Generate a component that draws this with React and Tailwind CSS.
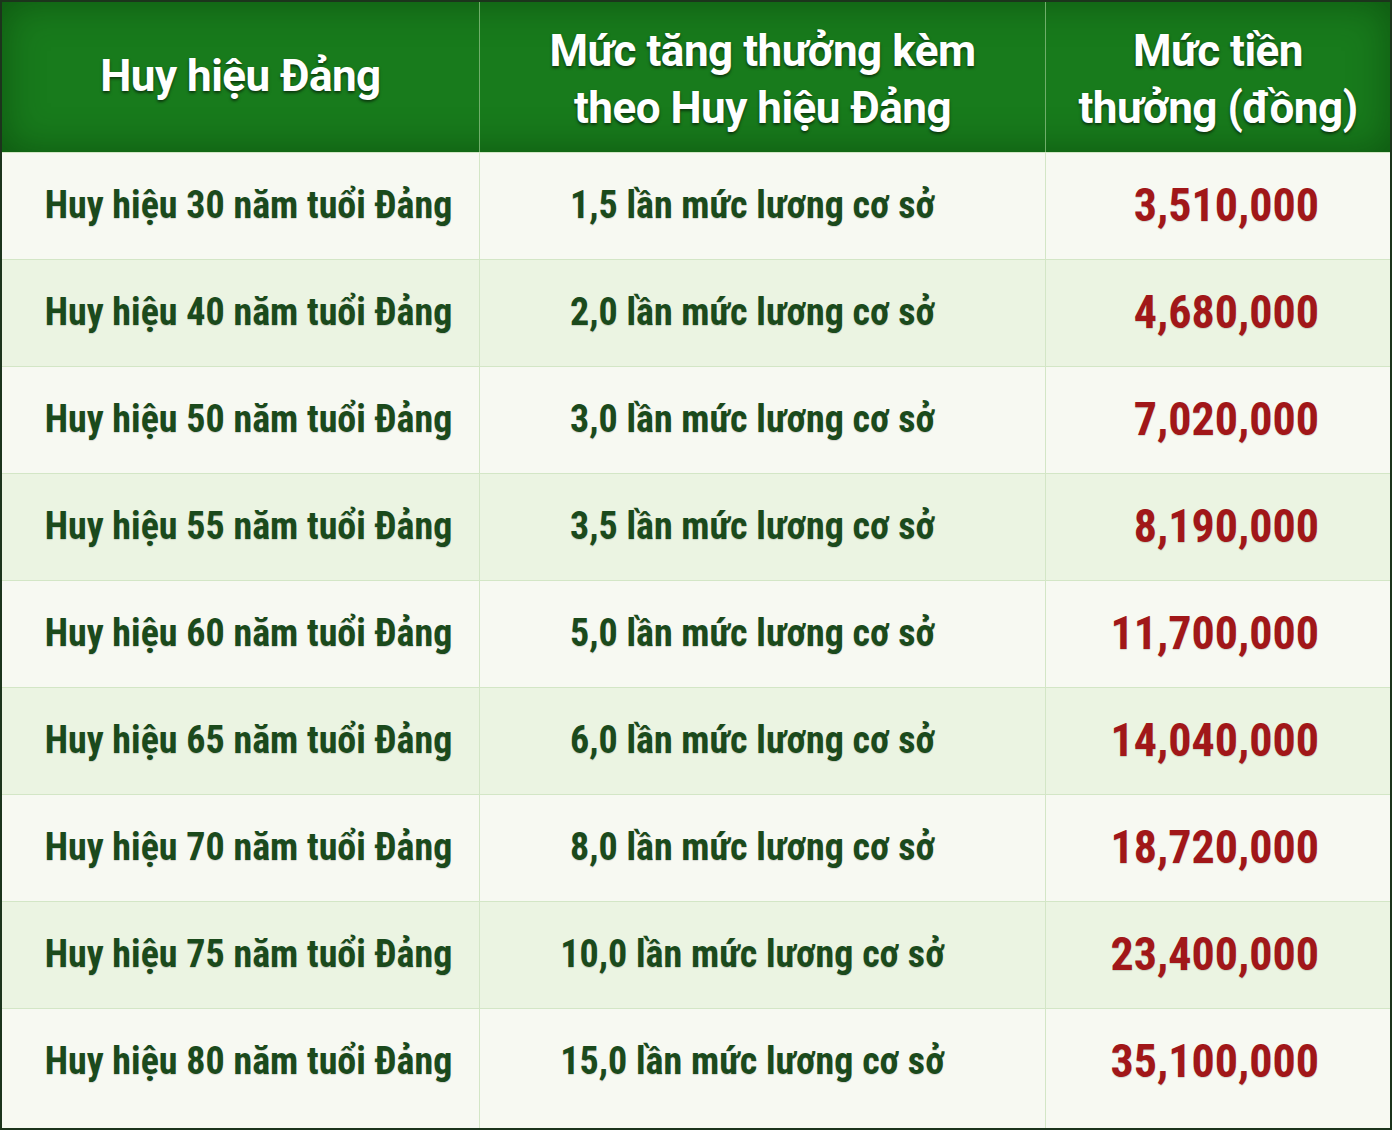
const rows = [
  { badge: "Huy hiệu 30 năm tuổi Đảng", rate: "1,5 lần mức lương cơ sở", amount: "3,510,000" },
  { badge: "Huy hiệu 40 năm tuổi Đảng", rate: "2,0 lần mức lương cơ sở", amount: "4,680,000" },
  { badge: "Huy hiệu 50 năm tuổi Đảng", rate: "3,0 lần mức lương cơ sở", amount: "7,020,000" },
  { badge: "Huy hiệu 55 năm tuổi Đảng", rate: "3,5 lần mức lương cơ sở", amount: "8,190,000" },
  { badge: "Huy hiệu 60 năm tuổi Đảng", rate: "5,0 lần mức lương cơ sở", amount: "11,700,000" },
  { badge: "Huy hiệu 65 năm tuổi Đảng", rate: "6,0 lần mức lương cơ sở", amount: "14,040,000" },
  { badge: "Huy hiệu 70 năm tuổi Đảng", rate: "8,0 lần mức lương cơ sở", amount: "18,720,000" },
  { badge: "Huy hiệu 75 năm tuổi Đảng", rate: "10,0 lần mức lương cơ sở", amount: "23,400,000" },
  { badge: "Huy hiệu 80 năm tuổi Đảng", rate: "15,0 lần mức lương cơ sở", amount: "35,100,000" },
]

const condensed = { fontFamily: '"Roboto Condensed", Roboto, "Liberation Sans Narrow", sans-serif' }
const head = { fontFamily: 'Roboto, "Liberation Sans", sans-serif' }

export default function App() {
  return (
    <div className="w-[1392px] h-[1130px] flex flex-col border-2 border-[#1c341c] bg-[#f7f9f2] overflow-hidden">
      <div
        className="h-[150px] shrink-0 grid grid-cols-[478px_566px_1fr] bg-[#187b1c] shadow-[inset_0_0_40px_rgba(0,40,0,0.45)] text-white font-bold [text-shadow:0_2px_3px_rgba(0,0,0,0.55)]"
        style={head}
      >
        <div className="flex items-center justify-center border-r border-[#6fae6a] text-[44px] tracking-[-0.5px] pb-[2px]">
          Huy hiệu Đảng
        </div>
        <div className="flex flex-col items-center justify-center border-r border-[#6fae6a] text-[44px] leading-[57px] tracking-[-0.5px] text-center pt-[6px]">
          <span>Mức tăng thưởng kèm</span>
          <span>theo Huy hiệu Đảng</span>
        </div>
        <div className="flex flex-col items-center justify-center text-[44px] leading-[57px] tracking-[-0.5px] text-center pt-[6px]">
          <span>Mức tiền</span>
          <span>thưởng (đồng)</span>
        </div>
      </div>
      <div className="flex-1 flex flex-col" style={condensed}>
        {rows.map((r, i) => (
          <div
            key={r.badge}
            className={
              "grid grid-cols-[478px_566px_1fr] border-t border-[#d3e6c6] " +
              (i === rows.length - 1 ? "flex-1 " : "h-[107px] ") +
              (i % 2 === 1 ? "bg-[#ebf4e2]" : "bg-[#f7f9f2]")
            }
          >
            <div className="border-r border-[#d3e6c6]">
              <div className="h-[106px] flex items-center justify-center text-[38px] font-bold text-[#1b4a1c] [text-shadow:0_1px_1px_rgba(0,0,0,0.15)] pl-[16px] pb-[2px]">
                {r.badge}
              </div>
            </div>
            <div className="border-r border-[#d3e6c6]">
              <div className="h-[106px] flex items-center justify-center text-[38px] font-bold text-[#1b4a1c] [text-shadow:0_1px_1px_rgba(0,0,0,0.15)] pr-[20px] pb-[2px]">
                {r.rate}
              </div>
            </div>
            <div className="h-[106px] flex items-center justify-end pr-[71px] text-[46px] font-bold text-[#a11719] [text-shadow:0_1px_1px_rgba(0,0,0,0.15)] pb-[2px]">
              {r.amount}
            </div>
          </div>
        ))}
      </div>
    </div>
  )
}
